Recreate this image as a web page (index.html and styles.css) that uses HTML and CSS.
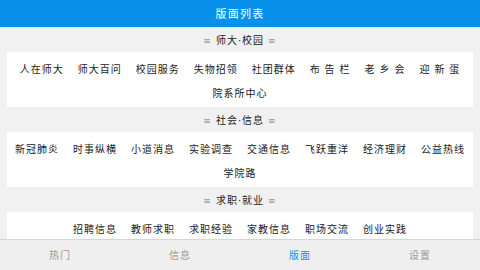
FILE: index.html
```html
<!DOCTYPE html>
<html lang="zh-CN">
<head>
<meta charset="utf-8">
<title>版面列表</title>
<link rel="stylesheet" href="styles.css">
</head>
<body>
<div class="app">
  <header class="topbar">版面列表</header>
  <main class="content">
    <div class="sec-title"><span class="eq">≡</span>师大<span class="dot">·</span>校园<span class="eq">≡</span></div>
    <div class="card">
      <span class="item">人在师大</span>
      <span class="item">师大百问</span>
      <span class="item">校园服务</span>
      <span class="item">失物招领</span>
      <span class="item">社团群体</span>
      <span class="item">布 告 栏</span>
      <span class="item">老 乡 会</span>
      <span class="item">迎 新 蛋</span>
      <span class="item">院系所中心</span>
    </div>
    <div class="sec-title"><span class="eq">≡</span>社会<span class="dot">·</span>信息<span class="eq">≡</span></div>
    <div class="card">
      <span class="item">新冠肺炎</span>
      <span class="item">时事纵横</span>
      <span class="item">小道消息</span>
      <span class="item">实验调查</span>
      <span class="item">交通信息</span>
      <span class="item">飞跃重洋</span>
      <span class="item">经济理财</span>
      <span class="item">公益热线</span>
      <span class="item">学院路</span>
    </div>
    <div class="sec-title"><span class="eq">≡</span>求职<span class="dot">·</span>就业<span class="eq">≡</span></div>
    <div class="card">
      <span class="item">招聘信息</span>
      <span class="item">教师求职</span>
      <span class="item">求职经验</span>
      <span class="item">家教信息</span>
      <span class="item">职场交流</span>
      <span class="item">创业实践</span>
    </div>
  </main>
  <nav class="tabbar">
    <span class="tab">热门</span>
    <span class="tab">信息</span>
    <span class="tab active">版面</span>
    <span class="tab">设置</span>
  </nav>
</div>
</body>
</html>
```
FILE: styles.css
```css
* { box-sizing: border-box; }
html, body {
  margin: 0;
  padding: 0;
  width: 480px;
  height: 270px;
  overflow: hidden;
}
body {
  font-family: "Noto Sans CJK SC", "Noto Sans", sans-serif;
  background: #f1f1f1;
  color: #222;
}
.app {
  display: flex;
  flex-direction: column;
  width: 480px;
  height: 270px;
}
.topbar {
  height: 27px;
  flex: 0 0 27px;
  background: #0891ea;
  color: #fff;
  font-size: 11px;
  letter-spacing: 1.2px;
  line-height: 27px;
  text-align: center;
}
.content {
  flex: 1 1 auto;
  overflow: hidden;
  padding: 0 7px;
}
.sec-title {
  height: 25px;
  line-height: 25px;
  text-align: center;
  font-size: 10px;
  letter-spacing: 1px;
  color: #222;
}
.dot {
  font-family: "DejaVu Sans", sans-serif;
  letter-spacing: 0;
  margin-right: 1px;
}
.eq {
  color: #999;
  margin: 0 4px;
  font-family: "DejaVu Sans", sans-serif;
  font-size: 9px;
}
.card {
  background: #fff;
  display: flex;
  flex-wrap: wrap;
  justify-content: center;
  padding: 5px 0 2px;
}
.item {
  padding: 0 7px;
  line-height: 24px;
  font-size: 10px;
  letter-spacing: 1px;
  word-spacing: 0.7px;
  color: #1a1a1a;
  white-space: pre;
}
.tabbar {
  flex: 0 0 31px;
  height: 31px;
  display: grid;
  grid-template-columns: repeat(4, 1fr);
  background: #efefef;
  border-top: 1px solid #d6d6d6;
}
.tab {
  text-align: center;
  line-height: 30px;
  font-size: 10px;
  letter-spacing: 1px;
  color: #9a9a9a;
}
.tab.active {
  color: #1b8fe3;
}
```
